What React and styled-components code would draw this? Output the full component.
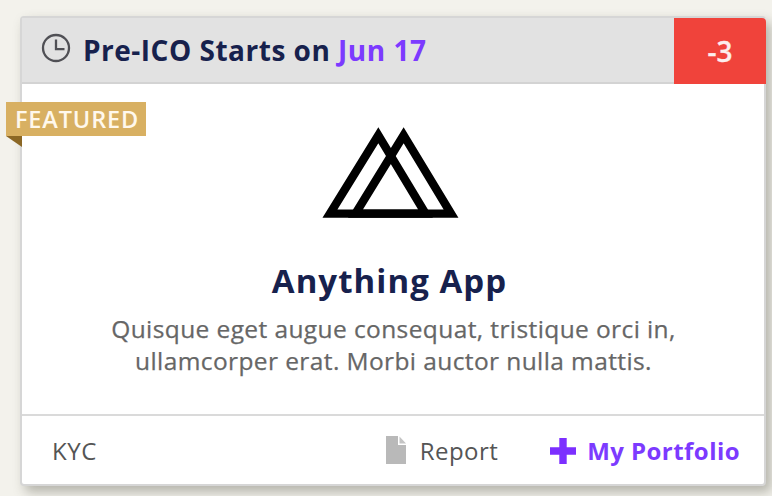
import React from "react";
import styled, { createGlobalStyle } from "styled-components";

const GlobalStyle = createGlobalStyle`
  * { box-sizing: border-box; }
  body {
    margin: 0;
    background: #f3f2ec;
    font-family: "Open Sans", "Noto Sans", sans-serif;
    overflow: hidden;
  }
`;

const Page = styled.main`
  height: 496px;
  padding: 16px 6px 0 20px;
`;

const Card = styled.article`
  position: relative;
  display: flex;
  flex-direction: column;
  height: 470px;
  background: #fff;
  border: 2px solid #d6d6d6;
  border-radius: 4px;
  box-shadow: 5px 6px 12px rgba(60, 60, 45, 0.34);
`;

const Header = styled.header`
  display: flex;
  align-items: center;
  height: 66px;
  padding-left: 19px;
  margin-right: -2px;
  background: linear-gradient(#d3d3d3, #d3d3d3) bottom / 100% 2px no-repeat #e2e2e2;
`;

const ClockIcon = styled.svg`
  width: 30px;
  height: 30px;
  margin: -6px 12px 0 0;
  flex: none;
`;

const Heading = styled.h2`
  flex: 1;
  margin: -3px 0 0;
  color: #17214d;
  font-size: 28px;
  line-height: 38px;
  font-weight: 700;
  letter-spacing: 0.5px;
  white-space: nowrap;
`;

const HeadingDate = styled.span`
  color: #7c3aff;
`;

const Countdown = styled.div`
  display: flex;
  align-items: center;
  justify-content: center;
  align-self: stretch;
  width: 92px;
  border-top-right-radius: 4px;
  background: #f0433b;
  color: #fdeeee;
  font-size: 28px;
  font-weight: 600;
  -webkit-text-stroke: 0.3px #fdeeee;
`;

const Ribbon = styled.div`
  position: absolute;
  left: -16px;
  top: 84px;
  display: flex;
  align-items: center;
  width: 140px;
  height: 34px;
  padding-left: 9px;
  background: #d8b062;
  color: #fff8ec;
  font-size: 23.5px;
  font-weight: 600;
  letter-spacing: 0.85px;
  white-space: nowrap;

  &::after {
    content: "";
    position: absolute;
    left: 0;
    top: 100%;
    border-style: solid;
    border-width: 0 16px 11px 0;
    border-color: transparent #8b6725 transparent transparent;
  }
`;

const Body = styled.section`
  display: flex;
  flex: 1;
  flex-direction: column;
  align-items: center;
  padding-top: 43px;
`;

const Logo = styled.svg`
  width: 138px;
  height: 92px;
  margin-right: 5px;
`;

const Title = styled.h1`
  margin: 39px 7px 0 0;
  color: #17214d;
  font-size: 33px;
  line-height: 46px;
  font-weight: 700;
  letter-spacing: 1.05px;
  white-space: nowrap;
`;

const Description = styled.p`
  margin: 9px 0 0 1px;
  color: #666;
  font-size: 24.5px;
  line-height: 32px;
  letter-spacing: 0.4px;
  -webkit-text-stroke: 0.25px #666;
  text-align: center;
  white-space: nowrap;
`;

const Footer = styled.footer`
  display: flex;
  align-items: center;
  height: 70px;
  padding: 1px 24px 0 30px;
  border-top: 2px solid #dadada;
  color: #555;
  font-size: 24px;
  line-height: 33px;
`;

const Tag = styled.span`
  flex: 1;
  letter-spacing: 0.6px;
`;

const Action = styled.a`
  display: flex;
  align-items: center;
  margin-left: ${(p) => (p.$primary ? "52px" : "0")};
  color: ${(p) => (p.$primary ? "#7c3aff" : "#555")};
  font-weight: ${(p) => (p.$primary ? 700 : 400)};
  letter-spacing: 0.45px;
  white-space: nowrap;
`;

const ActionIcon = styled.svg`
  width: ${(p) => p.$w}px;
  height: 28px;
  margin: -1px ${(p) => p.$gap}px 0 0;
  flex: none;
`;

export default function App() {
  return (
    <Page>
      <GlobalStyle />
      <Card>
        <Header>
          <ClockIcon viewBox="0 0 30 30" fill="none" stroke="#505055" strokeWidth="2.3">
            <circle cx="15" cy="15" r="13" />
            <path d="M15 6.5v9.7h8.5" />
          </ClockIcon>
          <Heading>
            Pre-ICO Starts on <HeadingDate>Jun 17</HeadingDate>
          </Heading>
          <Countdown>-3</Countdown>
        </Header>
        <Body>
          <Logo viewBox="0 0 138 92" fill="none" stroke="#000" strokeWidth="8.4">
            <path d="M8 86.6H103.5L56.3 8.2z" />
            <path d="M33.5 86.6h95.5L81.6 8.2z" />
          </Logo>
          <Title>Anything App</Title>
          <Description>
            Quisque eget augue consequat, tristique orci in,
            <br />
            ullamcorper erat. Morbi auctor nulla mattis.
          </Description>
        </Body>
        <Footer>
          <Tag>KYC</Tag>
          <Action>
            <ActionIcon $w={20} $gap={14} viewBox="0 0 20 28">
              <path d="M0 0h12v9h8v19H0z" fill="#b9b9b9" />
              <path d="M13.5 0.5L20 7.5h-6.5z" fill="#c4c4c4" />
            </ActionIcon>
            Report
          </Action>
          <Action $primary>
            <ActionIcon $w={26} $gap={11} viewBox="0 0 26 28">
              <path d="M9.3 2h7.4v9.3H26v7.4h-9.3V28H9.3v-9.3H0v-7.4h9.3z" fill="#7c2fff" />
            </ActionIcon>
            My Portfolio
          </Action>
        </Footer>
        <Ribbon>FEATURED</Ribbon>
      </Card>
    </Page>
  );
}
